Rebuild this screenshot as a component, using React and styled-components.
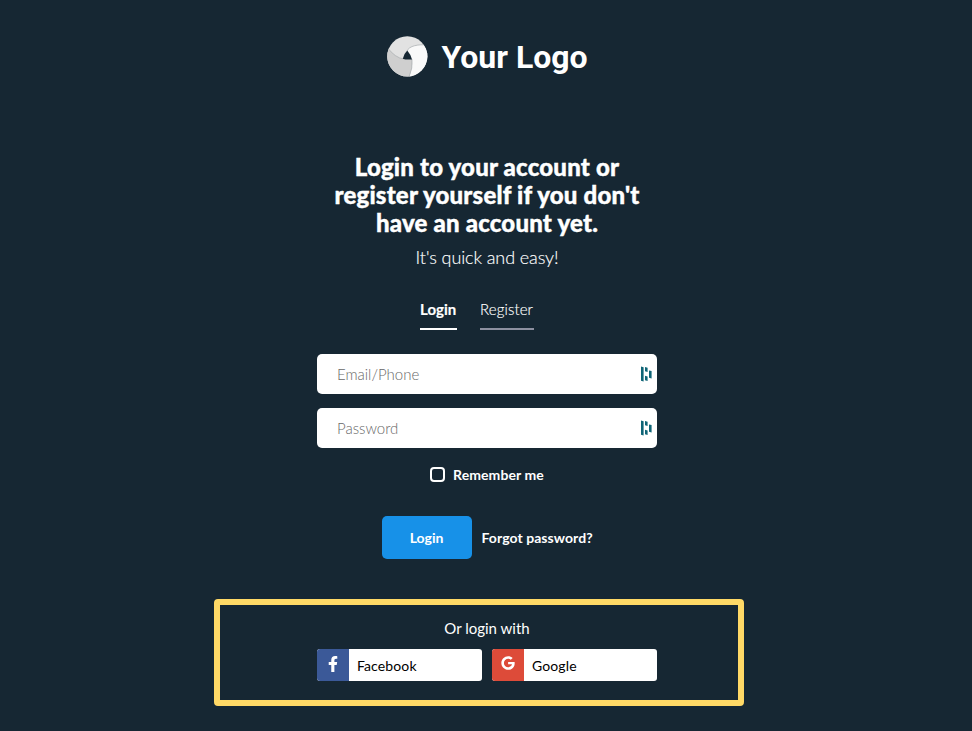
import React from "react";
import styled, { createGlobalStyle } from "styled-components";
import { FaFacebookF, FaGoogle } from "react-icons/fa";

const GlobalStyle = createGlobalStyle`
  * { box-sizing: border-box; }
  body { margin: 0; background: #162733; overflow: hidden; }
  button, input { font-family: inherit; }
`;

const Page = styled.main`
  width: 972px;
  height: 731px;
  display: flex;
  flex-direction: column;
  align-items: center;
  padding: 35px 0 0 2px;
  background: #162733;
  color: #fff;
  font-family: Lato, sans-serif;
`;

const Brand = styled.header`
  display: flex;
  align-items: center;
  gap: 14px;
  height: 42px;
  width: 201px;
`;

const BrandMark = styled.svg`
  flex: none;
  width: 41px;
  height: 41px;
`;

const BrandName = styled.span`
  padding-top: 2px;
  font: 700 32px/42px Roboto, sans-serif;
  letter-spacing: 0;
  white-space: nowrap;
`;

const Title = styled.h1`
  margin: 76px 0 0;
  width: 340px;
  font-size: 24px;
  line-height: 28px;
  font-weight: 900;
  letter-spacing: 0.2px;
  -webkit-text-stroke: 0.4px #fff;
  text-align: center;
  white-space: nowrap;
`;

const Subtitle = styled.p`
  margin: 7px 0 0;
  font-size: 18px;
  line-height: 26px;
  font-weight: 300;
  letter-spacing: -0.1px;
  -webkit-text-stroke: 0.15px #fff;
`;

const Tabs = styled.nav`
  display: flex;
  gap: 23px;
  margin-top: 28px;
  height: 32px;
  padding-right: 20px;
`;

const Tab = styled.a`
  display: flex;
  justify-content: flex-start;
  width: ${(p) => (p.$active ? 37 : 54)}px;
  border-bottom: 2px solid ${(p) => (p.$active ? "#fff" : "#8d90a0")};
  font-size: 15px;
  line-height: 22px;
  font-weight: ${(p) => (p.$active ? 700 : 300)};
  letter-spacing: ${(p) => (p.$active ? 0 : 0.12)}px;
  -webkit-text-stroke: 0.15px #fff;
  white-space: nowrap;
`;

const Fields = styled.div`
  display: grid;
  gap: 14px;
  width: 340px;
  margin-top: 24px;
`;

const Field = styled.label`
  display: flex;
  align-items: center;
  height: 40px;
  padding: 0 5px 0 20px;
  border-radius: 5px;
  background: #fff;
`;

const Input = styled.input`
  flex: 1;
  min-width: 0;
  padding: 0;
  border: 0;
  outline: 0;
  background: transparent;
  font-size: 15px;
  font-weight: 300;
  color: #333;
  &::placeholder { color: #686868; opacity: 1; }
`;

const ManagerIcon = styled.svg`
  width: 12px;
  height: 16px;
  fill: #0e6476;
`;

const Remember = styled.label`
  display: flex;
  align-items: center;
  gap: 8px;
  height: 16px;
  margin-top: 18px;
  font-size: 14px;
  font-weight: 700;
  letter-spacing: 0.09px;
`;

const Checkbox = styled.span`
  width: 15px;
  height: 15px;
  border: 2px solid #fff;
  border-radius: 4px;
`;

const Actions = styled.div`
  display: flex;
  align-items: center;
  gap: 10px;
  margin-top: 34px;
  width: 211px;
  height: 43px;
  font-size: 14px;
  font-weight: 700;
  letter-spacing: 0.06px;
  white-space: nowrap;
`;

const LoginButton = styled.button`
  width: 90px;
  height: 43px;
  flex: none;
  border: 0;
  border-radius: 5px;
  background: #1791e8;
  color: #fff;
  font-size: 14px;
  font-weight: 700;
`;

const SocialPanel = styled.section`
  align-self: flex-start;
  width: 530px;
  height: 107px;
  margin: 40px 0 0 212px;
  padding: 12px 81px 0 97px;
  border: 6px solid #ffd966;
  border-radius: 4px;
`;

const SocialTitle = styled.p`
  margin: 0;
  font-size: 15px;
  line-height: 22px;
  text-align: center;
`;

const SocialButtons = styled.div`
  display: flex;
  gap: 10px;
  margin-top: 10px;
`;

const SocialButton = styled.button`
  display: flex;
  width: 165px;
  height: 32px;
  padding: 0;
  border: 0;
  border-radius: 3px;
  overflow: hidden;
  background: #fff;
  color: #000;
  font-size: 14px;
  line-height: 34px;
  letter-spacing: 0.12px;
`;

const SocialIcon = styled.span`
  display: flex;
  justify-content: center;
  width: 32px;
  height: 32px;
  padding-top: 6.5px;
  margin-right: 8px;
  background: ${(p) => p.$color};
  color: #fff;
  font-size: ${(p) => p.$size}px;
`;

function Aperture() {
  return (
    <BrandMark viewBox="0 0 41 41">
      <clipPath id="disc"><circle cx="20.3" cy="20.4" r="20.1" /></clipPath>
      <g clipPath="url(#disc)">
        <rect width="41" height="41" fill="#e2e2e2" />
        <path d="M41 9C31 8 22 10 20 15L25 23Q26 32 22 41H41Z" fill="#f9f9f9" />
        <path d="M0 11Q8 22 17 23H25Q26 32 22 41H0Z" fill="#cfcfcf" />
        <path d="M41 9C31 8 22 10 20 15M0 11Q8 22 17 23M25 23Q26 32 22 41" fill="none" stroke="#a9adb0" strokeWidth=".7" />
        <path d="M20.3 14.4Q23.5 18 25 23.4Q19 24 15.8 22.7Q16.5 18 20.3 14.4Z" fill="#162733" />
      </g>
    </BrandMark>
  );
}

function PasswordManagerIcon() {
  return (
    <ManagerIcon viewBox="0 0 12 16">
      <path d="M1 .5 3.6 1.2V15.5L1 14.8ZM5 1 7.6 1.7V6L5 5.3ZM5 9.7 7.6 10.4V15L5 14.3ZM9 4.4 11.6 5.1V12.4L9 11.7Z" />
    </ManagerIcon>
  );
}

export default function App() {
  return (
    <>
      <GlobalStyle />
      <Page>
        <Brand>
          <Aperture />
          <BrandName>Your Logo</BrandName>
        </Brand>
        <Title>
          Login to your account or<br />register yourself if you don't<br />have an account yet.
        </Title>
        <Subtitle>It's quick and easy!</Subtitle>
        <Tabs>
          <Tab $active>Login</Tab>
          <Tab>Register</Tab>
        </Tabs>
        <Fields>
          <Field><Input placeholder="Email/Phone" /><PasswordManagerIcon /></Field>
          <Field><Input type="password" placeholder="Password" /><PasswordManagerIcon /></Field>
        </Fields>
        <Remember><Checkbox />Remember me</Remember>
        <Actions>
          <LoginButton>Login</LoginButton>
          <span>Forgot password?</span>
        </Actions>
        <SocialPanel>
          <SocialTitle>Or login with</SocialTitle>
          <SocialButtons>
            <SocialButton><SocialIcon $color="#3b5998" $size={16}><FaFacebookF /></SocialIcon>Facebook</SocialButton>
            <SocialButton><SocialIcon $color="#dd4b39" $size={14}><FaGoogle /></SocialIcon>Google</SocialButton>
          </SocialButtons>
        </SocialPanel>
      </Page>
    </>
  );
}
